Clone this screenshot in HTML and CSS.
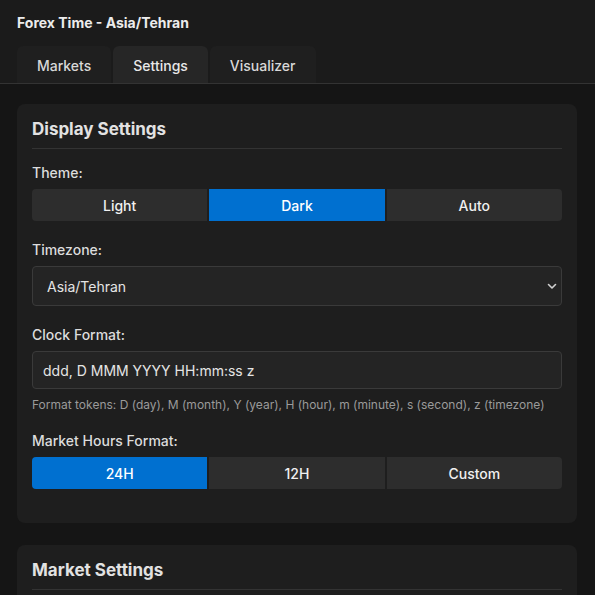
FILE: index.html
```html
<!DOCTYPE html>
<html lang="en">
<head>
    <meta charset="UTF-8">
    <meta name="viewport" content="width=device-width, initial-scale=1.0">
    <title>Forex Time</title>
    <link rel="stylesheet" href="styles.css">
</head>
<body>
    <div class="header">
        <div class="title">Forex Time - Asia/Tehran</div>
        <div class="tabs">
            <button class="tab">Markets</button>
            <button class="tab active">Settings</button>
            <button class="tab">Visualizer</button>
        </div>
    </div>

    <div class="content">
        <div class="card">
            <h2>Display Settings</h2>

            <div class="form-group">
                <label>Theme:</label>
                <div class="btn-group">
                    <button>Light</button>
                    <button class="active">Dark</button>
                    <button>Auto</button>
                </div>
            </div>

            <div class="form-group">
                <label for="timezone">Timezone:</label>
                <div class="select-wrap">
                    <select id="timezone">
                        <option>Asia/Tehran</option>
                    </select>
                    <svg class="chevron" width="10" height="10" viewBox="0 0 10 10">
                        <path d="M1.5 3.5 L5 7 L8.5 3.5" fill="none" stroke="#d0d0d0" stroke-width="1.6" stroke-linecap="round" stroke-linejoin="round"/>
                    </svg>
                </div>
            </div>

            <div class="form-group">
                <label for="clockFormat">Clock Format:</label>
                <input type="text" id="clockFormat" value="ddd, D MMM YYYY HH:mm:ss z">
                <div class="help">Format tokens: D (day), M (month), Y (year), H (hour), m (minute), s (second), z (timezone)</div>
            </div>

            <div class="form-group">
                <label>Market Hours Format:</label>
                <div class="btn-group">
                    <button class="active">24H</button>
                    <button>12H</button>
                    <button>Custom</button>
                </div>
            </div>
        </div>

        <div class="card">
            <h2>Market Settings</h2>
        </div>
    </div>
</body>
</html>
```

FILE: styles.css
```css
body {
    font-family: Inter, "Noto Sans", sans-serif;
    margin: 0;
    padding: 0;
    background-color: #151515;
    color: #e0e0e0;
}
.header {
    background-color: #1b1b1b;
    padding: 14px 0 0;
    border-bottom: 1px solid #333;
}
.title {
    font-size: 14px;
    font-weight: 700;
    line-height: 18px;
    padding: 0 17px;
    color: #ececec;
}
.tabs {
    display: flex;
    gap: 2px;
    margin-top: 14px;
    padding: 0 17px;
}
.tab {
    height: 37px;
    padding: 1px 20px 0;
    border: none;
    border-radius: 6px 6px 0 0;
    background-color: #1f1f1f;
    color: #d8d8d8;
    font-family: inherit;
    font-size: 14px;
    font-weight: 500;
}
.tab.active {
    background-color: #262626;
    color: #e8e8e8;
}
.content {
    padding: 20px 18px 0 17px;
}
.card {
    background-color: #1e1e1e;
    border-radius: 8px;
    padding: 15px 15px 14px;
    margin-bottom: 22px;
}
.card h2 {
    margin: 0 0 15px;
    font-size: 17px;
    line-height: 20px;
    font-weight: 700;
    padding-bottom: 9px;
    border-bottom: 1px solid #333;
    color: #e2e2e2;
}
.form-group {
    margin-bottom: 20px;
}
label {
    display: block;
    font-size: 14px;
    font-weight: 500;
    line-height: 18px;
    margin-bottom: 7px;
    color: #dcdcdc;
}
.btn-group {
    display: flex;
    gap: 2px;
}
.btn-group button {
    flex: 1;
    height: 32px;
    border: none;
    background-color: #2d2d2d;
    color: #f0f0f0;
    font-family: inherit;
    font-size: 14px;
    font-weight: 500;
}
.btn-group button:first-child {
    border-radius: 4px 0 0 4px;
}
.btn-group button:last-child {
    border-radius: 0 4px 4px 0;
}
.btn-group button.active {
    background-color: #0070d0;
    color: #fff;
}
.select-wrap {
    position: relative;
}
select,
input[type="text"] {
    display: block;
    width: 100%;
    box-sizing: border-box;
    border: 1px solid #3a3a3a;
    border-radius: 4px;
    background-color: #242424;
    color: #e4e4e4;
    font-family: inherit;
    font-size: 14px;
}
select {
    height: 40px;
    padding: 0 14px;
    appearance: none;
}
input[type="text"] {
    height: 38px;
    padding: 0 10px;
}
.chevron {
    position: absolute;
    right: 5px;
    top: 15px;
}
.help {
    margin-top: 8px;
    font-size: 12px;
    line-height: 15px;
    color: #9a9a9a;
}
```
